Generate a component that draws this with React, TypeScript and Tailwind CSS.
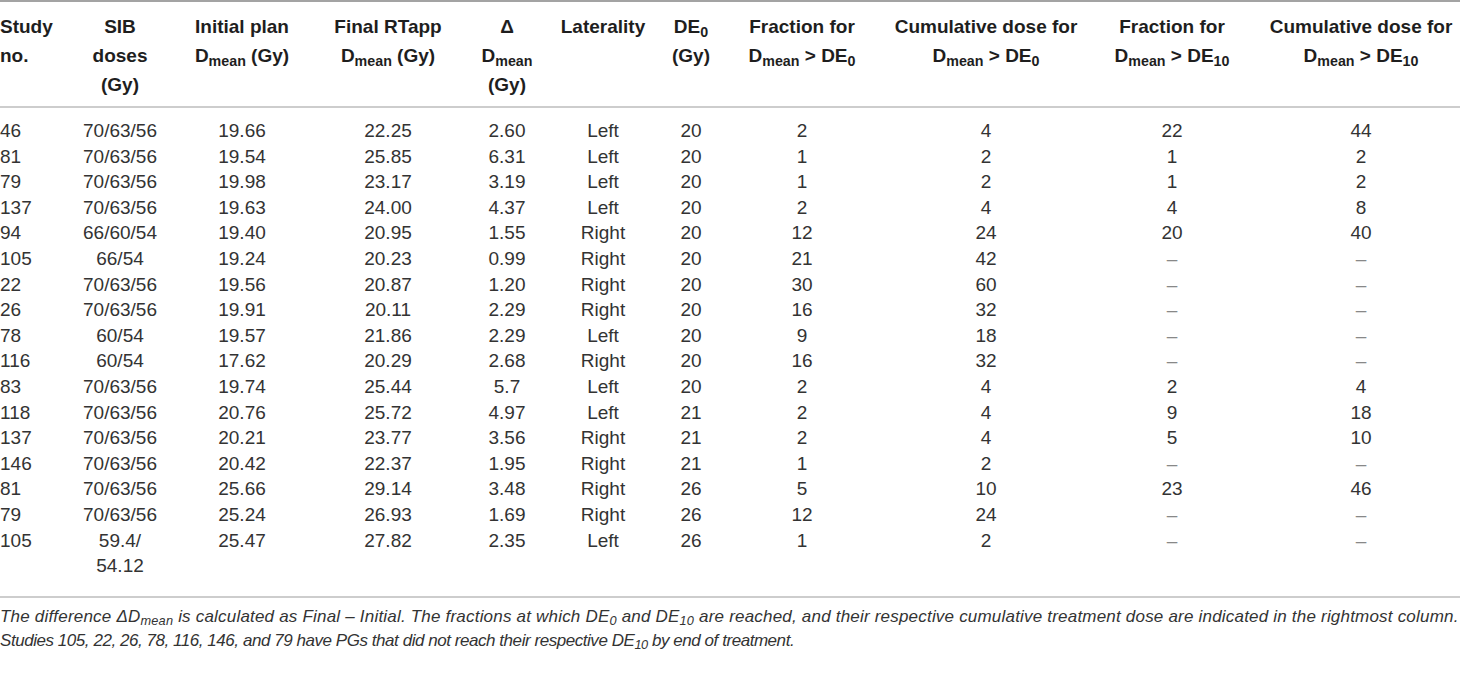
import React from 'react';

const rows: string[][] = [
  ['46', '70/63/56', '19.66', '22.25', '2.60', 'Left', '20', '2', '4', '22', '44'],
  ['81', '70/63/56', '19.54', '25.85', '6.31', 'Left', '20', '1', '2', '1', '2'],
  ['79', '70/63/56', '19.98', '23.17', '3.19', 'Left', '20', '1', '2', '1', '2'],
  ['137', '70/63/56', '19.63', '24.00', '4.37', 'Left', '20', '2', '4', '4', '8'],
  ['94', '66/60/54', '19.40', '20.95', '1.55', 'Right', '20', '12', '24', '20', '40'],
  ['105', '66/54', '19.24', '20.23', '0.99', 'Right', '20', '21', '42', '–', '–'],
  ['22', '70/63/56', '19.56', '20.87', '1.20', 'Right', '20', '30', '60', '–', '–'],
  ['26', '70/63/56', '19.91', '20.11', '2.29', 'Right', '20', '16', '32', '–', '–'],
  ['78', '60/54', '19.57', '21.86', '2.29', 'Left', '20', '9', '18', '–', '–'],
  ['116', '60/54', '17.62', '20.29', '2.68', 'Right', '20', '16', '32', '–', '–'],
  ['83', '70/63/56', '19.74', '25.44', '5.7', 'Left', '20', '2', '4', '2', '4'],
  ['118', '70/63/56', '20.76', '25.72', '4.97', 'Left', '21', '2', '4', '9', '18'],
  ['137', '70/63/56', '20.21', '23.77', '3.56', 'Right', '21', '2', '4', '5', '10'],
  ['146', '70/63/56', '20.42', '22.37', '1.95', 'Right', '21', '1', '2', '–', '–'],
  ['81', '70/63/56', '25.66', '29.14', '3.48', 'Right', '26', '5', '10', '23', '46'],
  ['79', '70/63/56', '25.24', '26.93', '1.69', 'Right', '26', '12', '24', '–', '–'],
  ['105', '59.4/\n54.12', '25.47', '27.82', '2.35', 'Left', '26', '1', '2', '–', '–'],
];

const widths = [70, 100, 144, 148, 90, 102, 74, 148, 220, 152, 226];

const Dm = () => (
  <>
    D<sub>mean</sub>
  </>
);

const headers: React.ReactNode[] = [
  <>Study<br />no.</>,
  <>SIB<br />doses<br />(Gy)</>,
  <>Initial plan<br /><Dm /> (Gy)</>,
  <>Final RTapp<br /><Dm /> (Gy)</>,
  <>Δ<br /><Dm /><br />(Gy)</>,
  <>Laterality</>,
  <>DE<sub>0</sub><br />(Gy)</>,
  <>Fraction for<br /><Dm /> &gt; DE<sub>0</sub></>,
  <>Cumulative dose for<br /><Dm /> &gt; DE<sub>0</sub></>,
  <>Fraction for<br /><Dm /> &gt; DE<sub>10</sub></>,
  <>Cumulative dose for<br /><Dm /> &gt; DE<sub>10</sub></>,
];

export default function App() {
  const last = rows.length - 1;
  return (
    <div className="w-[1460px] h-[679px] overflow-hidden bg-white font-['Liberation_Sans',Arial,sans-serif] text-[#222]">
      <table className="table-fixed border-collapse w-[1474px]">
        <colgroup>
          {widths.map((w, i) => (
            <col key={i} style={{ width: w }} />
          ))}
        </colgroup>
        <thead>
          <tr className="border-t-2 border-b-2 border-t-[#a3a3a3] border-b-[#cdcdcd]">
            {headers.map((h, i) => (
              <th
                key={i}
                className={`align-top pt-[10px] pb-[7px] text-[19px] leading-[29px] font-bold text-[#1e1e1e] ${i === 0 ? 'text-left' : 'text-center'}`}
              >
                {h}
              </th>
            ))}
          </tr>
        </thead>
        <tbody className="border-b-2 border-[#cdcdcd]">
          {rows.map((r, ri) => (
            <tr key={ri}>
              {r.map((c, ci) => (
                <td
                  key={ci}
                  className={`align-top p-0 text-[19px] leading-[25.6px] whitespace-pre-line ${ci === 0 ? 'text-left' : 'text-center'} ${ri === 0 ? 'pt-[10px]' : ''} ${ri === last ? 'pb-[17px]' : ''} ${c === '–' ? 'text-[#888]' : 'text-[#333]'}`}
                >
                  {c}
                </td>
              ))}
            </tr>
          ))}
        </tbody>
      </table>
      <div className="pt-[7px] italic text-[17px] leading-[24px] text-[#333]">
        <p className="whitespace-nowrap tracking-[0.2px]">
          The difference <span>ΔD<sub>mean</sub></span> is calculated as Final – Initial. The fractions at which DE<sub>0</sub> and DE<sub>10</sub> are reached, and their respective cumulative treatment dose are indicated in the rightmost column.
        </p>
        <p className="whitespace-nowrap tracking-[-0.45px]">
          Studies 105, 22, 26, 78, 116, 146, and 79 have PGs that did not reach their respective DE<sub>10</sub> by end of treatment.
        </p>
      </div>
    </div>
  );
}
